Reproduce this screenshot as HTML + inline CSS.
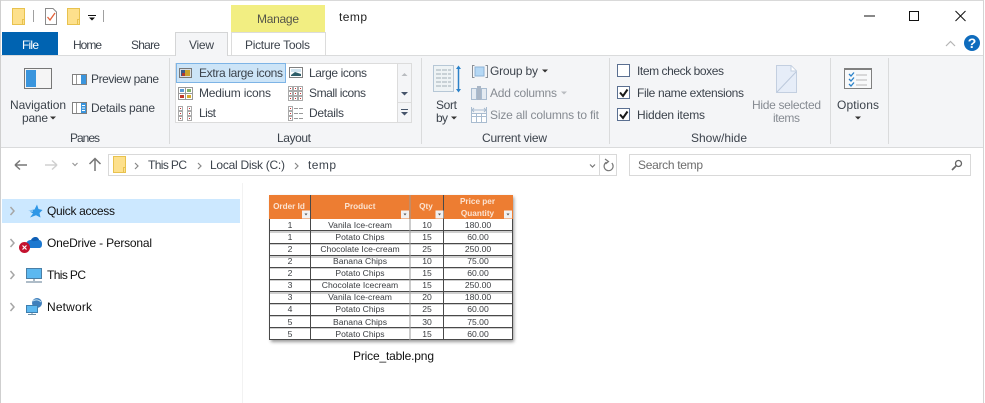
<!DOCTYPE html>
<html><head><meta charset="utf-8"><title>temp</title>
<style>
html,body{margin:0;padding:0;background:#fff;overflow:hidden}
svg{display:block}
text{font-family:"Liberation Sans",sans-serif;font-size:12px;fill:#2b2b2b}
.g{fill:#3c434c}
.d{fill:#868b92}
.t text{font-size:8.6px;fill:#3a3d41;text-anchor:middle}
.t .h{font-weight:bold;fill:#fbe3d2;font-size:8.2px}
</style></head><body>
<svg width="985" height="403" viewBox="0 0 985 403" xmlns="http://www.w3.org/2000/svg">
<defs>
<filter id="b" x="-5%" y="-5%" width="110%" height="110%"><feGaussianBlur stdDeviation="0.35"/></filter>
<filter id="s" x="-5%" y="-5%" width="112%" height="112%"><feGaussianBlur stdDeviation="1.5"/></filter>
<g id="folder"><path d="M.5.5H12.5V16.5H.5Z" fill="#fde08c" stroke="#e8c24e"/><path d="M12.5 11.5H10.5V16.5" fill="none" stroke="#e8c24e"/></g>
<g id="mini"><rect x=".5" y=".5" width="4" height="4" fill="#fff" stroke="#aaa"/><rect x="2" y="2" width="1" height="1" fill="#c33"/></g>
</defs>
<rect width="985" height="403" fill="#fff"/>
<rect width="985" height="1" fill="#d9d9d9"/>
<rect width="1" height="403" fill="#cfcfcf"/>
<rect x="983" width="1" height="403" fill="#d4d4d4"/>
<rect x="984" width="1" height="403" fill="#fff"/>

<!-- title bar -->
<use href="#folder" x="12" y="8"/>
<rect x="33" y="10" width="1" height="12" fill="#a0a0a0"/>
<path d="M45.500 8.500H53L56.500 12V24.500H45.500Z" fill="#fff" stroke="#8b8b8b"/>
<path d="M47.500 17L50 20L55 13" fill="none" stroke="#e2613a" stroke-width="1.300"/>
<use href="#folder" x="67" y="8"/>
<path d="M88 15H96V16H88ZM89 17.500H95L92 20.500Z" fill="#111"/>
<rect x="103" y="10" width="1" height="12" fill="#a0a0a0"/>
<rect x="231" y="5" width="94" height="27" fill="#f2ee82"/>
<text x="257" y="23" textLength="42" lengthAdjust="spacing" style="fill:#55554a">Manage</text>
<text x="339" y="21" textLength="28" lengthAdjust="spacing" style="fill:#222">temp</text>
<path d="M864 16H875" stroke="#111" stroke-width="1"/>
<rect x="909.500" y="11.500" width="9" height="9" fill="none" stroke="#111"/>
<path d="M955.500 11L965.500 21M965.500 11L955.500 21" stroke="#111" fill="none"/>

<!-- tabs -->
<rect x="2" y="32" width="56" height="23" fill="#0063b1"/>
<text x="22" y="49" textLength="17" lengthAdjust="spacing" style="fill:#fff">File</text>
<text x="73" y="49" textLength="29" lengthAdjust="spacing" class="g">Home</text>
<text x="131" y="49" textLength="29" lengthAdjust="spacing" class="g">Share</text>
<path d="M231.500 55V32.500H325.500V55" fill="#fff" stroke="#dcdcdc"/>
<text x="245" y="49" textLength="65" lengthAdjust="spacing" class="g">Picture Tools</text>

<!-- ribbon -->
<rect x="1" y="55" width="982" height="92" fill="#f4f5f7"/>
<rect x="1" y="55" width="982" height="1" fill="#dadbdc"/>
<rect x="1" y="147" width="982" height="1" fill="#dadbdc"/>
<path d="M175.500 56V32.500H227.500V56" fill="#f4f5f7" stroke="#d4d5d6"/>
<rect x="176" y="55" width="51" height="1" fill="#f4f5f7"/>
<text x="189" y="49" textLength="25" lengthAdjust="spacing" class="g">View</text>
<g fill="#dadbdc">
<rect x="169" y="58" width="1" height="86"/><rect x="421" y="58" width="1" height="86"/>
<rect x="609" y="58" width="1" height="86"/><rect x="830" y="58" width="1" height="86"/>
<rect x="888" y="58" width="1" height="86"/>
</g>

<!-- panes -->
<rect x="24.500" y="68.500" width="27" height="20" fill="#f5f5f5" stroke="#777"/>
<rect x="26" y="70" width="10" height="17" fill="#3a95dd"/>
<g>
<rect x="72.500" y="74.500" width="14" height="10" fill="#fff" stroke="#808080"/><rect x="81" y="75" width="5" height="9" fill="#3a95dd"/><path d="M76.500 75V84" stroke="#999"/>
<rect x="72.500" y="102.500" width="14" height="11" fill="#fff" stroke="#808080"/><rect x="81" y="103" width="5" height="10" fill="#3a95dd"/><path d="M76.500 103V113" stroke="#999"/><path d="M82 105.500H85M82 108H85M82 110.500H85" stroke="#fff"/>
</g>
<text x="10" y="109" textLength="56" lengthAdjust="spacing" class="g">Navigation</text>
<text x="22" y="122" textLength="26" lengthAdjust="spacing" class="g">pane</text>
<path d="M50 116.500H56L53 119.500Z" fill="#333"/>
<text x="91" y="83" textLength="68" lengthAdjust="spacing" class="g">Preview pane</text>
<text x="91" y="112" textLength="64" lengthAdjust="spacing" class="g">Details pane</text>
<text x="70" y="142" textLength="30" lengthAdjust="spacing" class="g">Panes</text>

<!-- layout -->
<rect x="175.500" y="63.500" width="236" height="59" fill="#fff" stroke="#dcdcdc"/>
<rect x="176.500" y="63.500" width="109" height="19" fill="#cce4f7" stroke="#7db4e6"/>
<rect x="397" y="64" width="14" height="58" fill="#f4f5f7"/>
<path d="M397.500 64V122M397 102.500H411" stroke="#dcdcdc" fill="none"/>
<path d="M401.500 76L404.500 73L407.500 76Z" fill="#b9bcc0"/>
<path d="M401 92H408L404.500 95.500Z" fill="#45546a"/>
<path d="M401 109H408V110H401ZM401 112H408L404.500 115.500Z" fill="#45546a"/>
<rect x="179.500" y="68.500" width="12" height="9" fill="#d9dee3" stroke="#777"/><rect x="181" y="70" width="9" height="6" fill="#3a5a8a"/><rect x="185" y="70" width="5" height="6" fill="#c8a22c"/><rect x="182" y="73" width="3" height="3" fill="#b03a2e"/>
<rect x="289.500" y="67.500" width="13" height="10" fill="#fff" stroke="#808080"/><rect x="291" y="69" width="10" height="3" fill="#cfe3ee"/><path d="M291 75L295 72L301 74V76H291Z" fill="#2f5f6a"/>
<g><rect x="178.500" y="87.500" width="14" height="12" fill="#fff" stroke="#999"/><path d="M185.500 88V99M179 93.500H192" stroke="#999"/><rect x="180" y="89" width="4" height="3" fill="#5b9bd5"/><rect x="187" y="89" width="4" height="3" fill="#7fb069"/><rect x="180" y="95" width="4" height="3" fill="#c0392b"/><rect x="187" y="95" width="4" height="3" fill="#d4ac2c"/></g>
<g><use href="#mini" x="288" y="86"/><use href="#mini" x="293" y="86"/><use href="#mini" x="298" y="86"/><use href="#mini" x="288" y="91"/><use href="#mini" x="293" y="91"/><use href="#mini" x="298" y="91"/><use href="#mini" x="288" y="96"/><use href="#mini" x="293" y="96"/><use href="#mini" x="298" y="96"/></g>
<g><use href="#mini" x="178" y="106"/><use href="#mini" x="178" y="111"/><use href="#mini" x="178" y="116"/><use href="#mini" x="187" y="106"/><use href="#mini" x="187" y="111"/><use href="#mini" x="187" y="116"/></g>
<g><use href="#mini" x="288" y="106"/><use href="#mini" x="288" y="111"/><use href="#mini" x="288" y="116"/><path d="M294 108.500H303M294 113.500H303M294 118.500H303" stroke="#999" stroke-dasharray="4 1"/></g>
<text x="199" y="77" textLength="84" lengthAdjust="spacing" class="g">Extra large icons</text>
<text x="309" y="77" textLength="58" lengthAdjust="spacing" class="g">Large icons</text>
<text x="199" y="97" textLength="72" lengthAdjust="spacing" class="g">Medium icons</text>
<text x="309" y="97" textLength="57" lengthAdjust="spacing" class="g">Small icons</text>
<text x="199" y="117" textLength="17" lengthAdjust="spacing" class="g">List</text>
<text x="309" y="117" textLength="35" lengthAdjust="spacing" class="g">Details</text>
<text x="277" y="142" textLength="34" lengthAdjust="spacing" class="g">Layout</text>

<!-- current view -->
<rect x="433.500" y="65.500" width="20" height="26" fill="#eef3f5" stroke="#b6c7d6"/>
<path d="M436 70H451M436 74H451M436 78H451M436 82H451M436 86H451" stroke="#bcc6cc" stroke-width="1.500" stroke-dasharray="5 1"/>
<path d="M458.500 68V90" stroke="#2b82c9" stroke-width="1.500"/><path d="M456 69L458.500 65.500L461 69ZM456 89L458.500 92.500L461 89Z" fill="#2b82c9"/>
<text x="436" y="109" textLength="21" lengthAdjust="spacing" class="g">Sort</text>
<text x="436" y="122" textLength="12" lengthAdjust="spacing" class="g">by</text>
<path d="M451 116.500H457L454 119.500Z" fill="#333"/>
<rect x="475" y="67" width="9" height="9" fill="#b5d8f5" stroke="#8fb4d6" stroke-width="1"/>
<path d="M474.500 65.500H472.500V77.500H474.500M485.500 65.500H487.500V77.500H485.500" fill="none" stroke="#8a8f96"/>
<text x="490" y="75" textLength="48" lengthAdjust="spacing" class="g">Group by</text>
<path d="M542 69.500H548L545 72.500Z" fill="#333"/>
<rect x="471.500" y="88.500" width="15" height="11" fill="#e4ebf2" stroke="#a9bcd0"/><rect x="477" y="86" width="4" height="14" fill="#a9b6c6"/><path d="M476.500 89V99M481.500 89V99" stroke="#a9bcd0"/>
<text x="490" y="97" textLength="67" lengthAdjust="spacing" class="d">Add columns</text>
<path d="M561 91.500H567L564 94.500Z" fill="#b9bcc0"/>
<rect x="471.500" y="113.500" width="15" height="9" fill="#fff" stroke="#a9bcd0"/><path d="M471 116.500H487M476.500 114V122M481.500 114V122" stroke="#a9bcd0"/><path d="M472 110H486M474 108L472 110L474 112M484 108L486 110L484 112M471.500 107V113M486.500 107V113" fill="none" stroke="#a9bcd0"/>
<text x="490" y="119" textLength="109" lengthAdjust="spacing" class="d">Size all columns to fit</text>
<text x="482" y="142" textLength="65" lengthAdjust="spacing" class="g">Current view</text>

<!-- show/hide -->
<g fill="#fff" stroke="#5a6f91">
<rect x="617.500" y="64.500" width="12" height="12"/><rect x="617.500" y="86.500" width="12" height="12"/><rect x="617.500" y="108.500" width="12" height="12"/>
</g>
<path d="M620 92.500L623 96L627.500 89.500M620 114.500L623 118L627.500 111.500" fill="none" stroke="#1a1a1a" stroke-width="2"/>
<text x="637" y="75" textLength="87" lengthAdjust="spacing" class="g">Item check boxes</text>
<text x="637" y="97" textLength="107" lengthAdjust="spacing" class="g">File name extensions</text>
<text x="637" y="119" textLength="68" lengthAdjust="spacing" class="g">Hidden items</text>
<path d="M776.500 65.500H791L796.500 71V92.500H776.500Z" fill="#e6edf8" stroke="#c3cfe0"/>
<path d="M777 92L796 72" stroke="#bcc9dc"/>
<path d="M791 66V71H796" fill="#fff" stroke="#c3cfe0"/>
<text x="752" y="109" textLength="69" lengthAdjust="spacing" class="d">Hide selected</text>
<text x="773" y="122" textLength="27" lengthAdjust="spacing" class="d">items</text>
<text x="691" y="142" textLength="56" lengthAdjust="spacing" class="g">Show/hide</text>

<!-- options -->
<rect x="844.500" y="68.500" width="27" height="20" fill="#f8f9fa" stroke="#808080"/>
<rect x="844" y="68" width="28" height="2" fill="#808080"/>
<path d="M849 74L851 76L854 72.500M849 79L851 81L854 77.500M849 84L851 86L854 82.500" fill="none" stroke="#2b82c9" stroke-width="1.300"/>
<path d="M856 75H867M856 80H867M856 85H867" stroke="#b8b8b8"/>
<text x="837" y="109" textLength="42" lengthAdjust="spacing" class="g">Options</text>
<path d="M855 116.500H861L858 119.500Z" fill="#333"/>

<!-- help -->
<path d="M946 46L950.500 41.500L955 46" fill="none" stroke="#b5b5b5" stroke-width="1.200"/>
<circle cx="972" cy="43" r="8" fill="#0f6cbd"/>
<text x="972" y="48" text-anchor="middle" style="fill:#fff;font-size:14px;font-weight:bold">?</text>

<!-- address -->
<path d="M15 165H27M15 165L20 160.500M15 165L20 169.500" fill="none" stroke="#777" stroke-width="1.500"/>
<path d="M45 165H57M57 165L52 160.500M57 165L52 169.500" fill="none" stroke="#d0d0d0" stroke-width="1.500"/>
<path d="M72.500 163L75 165.500L77.500 163" fill="none" stroke="#999" stroke-width="1.200"/>
<path d="M95 171V159M89.500 164L95 158.500L100.500 164" fill="none" stroke="#777" stroke-width="1.500"/>
<rect x="108.500" y="154.500" width="508" height="21" fill="#fff" stroke="#d9d9d9"/>
<path d="M599.500 155V175" stroke="#d9d9d9"/>
<use href="#folder" x="113" y="156"/>
<path d="M135 163L138 166L135 169M198 163L201 166L198 169M295 163L298 166L295 169" fill="none" stroke="#888" stroke-width="1.200"/>
<text x="148" y="169" textLength="39" lengthAdjust="spacing" class="g">This PC</text>
<text x="210" y="169" textLength="75" lengthAdjust="spacing" class="g">Local Disk (C:)</text>
<text x="308" y="169" textLength="28" lengthAdjust="spacing" class="g">temp</text>
<path d="M590 164.500L592.500 167L595 164.500" fill="none" stroke="#777" stroke-width="1.200"/>
<path d="M611.800 163A4.500 4.500 0 1 1 606.500 162.200M605 159L608.500 161.500L605.500 164" fill="none" stroke="#777" stroke-width="1.200"/>
<rect x="629.500" y="154.500" width="341" height="21" fill="#fff" stroke="#d9d9d9"/>
<text x="638" y="169" textLength="65" lengthAdjust="spacing" style="fill:#6d6d6d">Search temp</text>
<circle cx="958.500" cy="163.500" r="3" fill="none" stroke="#666" stroke-width="1.300"/>
<path d="M956 166L952 170" stroke="#666" stroke-width="1.600"/>

<!-- nav pane -->
<rect x="2" y="199" width="238" height="24" fill="#cce8ff"/>
<rect x="242" y="183" width="1" height="220" fill="#f2f2f2"/>
<path d="M10.500 207L14 211L10.500 215M10.500 239L14 243L10.500 247M10.500 271L14 275L10.500 279M10.500 303L14 307L10.500 311" fill="none" stroke="#a6a6a6" stroke-width="1.500"/>
<path d="M37 204.500L38.500 209L42.500 210L39.500 213L40.500 217.500L36 215.200L30 217.500L33 213.500L28 210.500L34.500 209.500Z" fill="#2f97e6"/>
<path d="M28 211H33M28 214H31" stroke="#cce8ff"/>
<path d="M26 245C26 241 29 240 31 240C33 236 38 236 39 240C41 240 42 242 42 244C42 247 41 248 39 248H29C27 248 26 247 26 245Z" fill="#1b78d0"/>
<path d="M31 240C33 236 38 236 39 240C36 241 33 242 31 240Z" fill="#0f5fb5"/>
<circle cx="24.500" cy="247.500" r="5.500" fill="#c4122f"/>
<path d="M22.500 245.500L26.500 249.500M26.500 245.500L22.500 249.500" stroke="#fff" stroke-width="1.200"/>
<rect x="26.500" y="268.500" width="15" height="10" fill="#5cb8f0" stroke="#4a7fa6"/>
<path d="M34 279V281M26 282H42" stroke="#7d95a8" stroke-width="1.300"/>
<circle cx="37" cy="303" r="5" fill="#3f7fbc"/><path d="M33 301C36 299 39 300 41 302" stroke="#bfe0f2" fill="none"/>
<rect x="26.500" y="305.500" width="11" height="7" fill="#5cb8f0" stroke="#3e7eae"/>
<path d="M32 313V314.500M28 314.500H36" stroke="#6d8ea5"/>
<text x="47" y="215" textLength="68" lengthAdjust="spacing" style="fill:#111">Quick access</text>
<text x="47" y="247" textLength="105" lengthAdjust="spacing" style="fill:#111">OneDrive - Personal</text>
<text x="47" y="279" textLength="39" lengthAdjust="spacing" style="fill:#111">This PC</text>
<text x="47" y="311" textLength="45" lengthAdjust="spacing" style="fill:#111">Network</text>

<!-- thumbnail -->
<rect x="271" y="197" width="243" height="145" fill="#555" filter="url(#s)" opacity=".6"/>
<g filter="url(#b)">
<rect x="269" y="195" width="244" height="145" fill="#fff"/>
<rect x="269" y="195" width="244" height="24" fill="#ed7d31"/>
<g fill="#cfcfcf"><rect x="269" y="231" width="244" height="2"/><rect x="269" y="244" width="244" height="1"/><rect x="269" y="256" width="244" height="2"/><rect x="269" y="268" width="244" height="1"/><rect x="269" y="280" width="244" height="1"/><rect x="269" y="292" width="244" height="2"/><rect x="269" y="304" width="244" height="1"/><rect x="269" y="316" width="244" height="1"/><rect x="269" y="328" width="244" height="1"/></g>
<path d="M269 230.500H513M269 243.500H513M269 255.500H513M269 267.500H513M269 279.500H513M269 291.500H513M269 303.500H513M269 315.500H513M269 327.500H513M269 339.500H513M269.500 219V340M310.500 195V340M443.500 195V340M512.500 219V340" stroke="#4a4a4a" fill="none"/>
<path d="M410 195V340" stroke="#9a9a9a" fill="none"/>
<g fill="#f1f1f1"><rect x="302" y="210.500" width="8" height="8"/><rect x="401" y="210.500" width="8" height="8"/><rect x="435.500" y="210.500" width="8" height="8"/><rect x="504" y="210.500" width="8" height="8"/></g>
<path d="M304.500 213.500H307.500L306 215.500ZM403.500 213.500H406.500L405 215.500ZM438 213.500H441L439.500 215.500ZM506.500 213.500H509.500L508 215.500Z" fill="#555"/>
<g class="t">
<text class="h" x="289" y="209">Order Id</text><text class="h" x="360" y="209">Product</text><text class="h" x="426" y="209">Qty</text><text class="h" x="477.500" y="204">Price per</text><text class="h" x="477.500" y="216">Quantity</text>
<text x="290" y="228">1</text><text x="360" y="228">Vanila Ice-cream</text><text x="427" y="228">10</text><text x="478" y="228">180.00</text>
<text x="290" y="240">1</text><text x="360" y="240">Potato Chips</text><text x="427" y="240">15</text><text x="478" y="240">60.00</text>
<text x="290" y="252">2</text><text x="360" y="252">Chocolate Ice-cream</text><text x="427" y="252">25</text><text x="478" y="252">250.00</text>
<text x="290" y="264">2</text><text x="360" y="264">Banana Chips</text><text x="427" y="264">10</text><text x="478" y="264">75.00</text>
<text x="290" y="276">2</text><text x="360" y="276">Potato Chips</text><text x="427" y="276">15</text><text x="478" y="276">60.00</text>
<text x="290" y="288">3</text><text x="360" y="288">Chocolate Icecream</text><text x="427" y="288">15</text><text x="478" y="288">250.00</text>
<text x="290" y="300">3</text><text x="360" y="300">Vanila Ice-cream</text><text x="427" y="300">20</text><text x="478" y="300">180.00</text>
<text x="290" y="312">4</text><text x="360" y="312">Potato Chips</text><text x="427" y="312">25</text><text x="478" y="312">60.00</text>
<text x="290" y="325">5</text><text x="360" y="325">Banana Chips</text><text x="427" y="325">30</text><text x="478" y="325">75.00</text>
<text x="290" y="337">5</text><text x="360" y="337">Potato Chips</text><text x="427" y="337">15</text><text x="478" y="337">60.00</text>
</g>
</g>
<text x="353" y="360" textLength="81" lengthAdjust="spacing" style="fill:#111">Price_table.png</text>
</svg>
</body></html>
